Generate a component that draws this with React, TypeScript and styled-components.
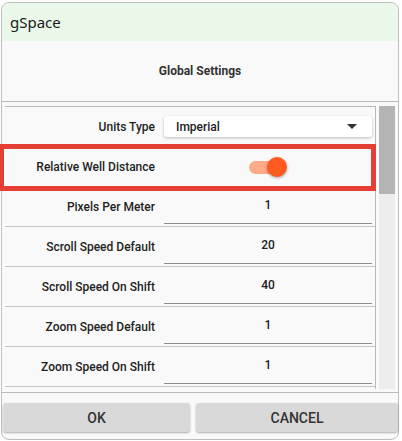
import React from "react";
import styled, { createGlobalStyle } from "styled-components";

const GlobalStyle = createGlobalStyle`
  * {
    box-sizing: border-box;
  }

  body {
    margin: 0;
    background: #ffffff;
    font-family: Roboto, "Liberation Sans", sans-serif;
  }
`;

interface Setting {
  label: string;
  value: string;
}

const numberSettings: Setting[] = [
  { label: "Pixels Per Meter", value: "1" },
  { label: "Scroll Speed Default", value: "20" },
  { label: "Scroll Speed On Shift", value: "40" },
  { label: "Zoom Speed Default", value: "1" },
  { label: "Zoom Speed On Shift", value: "1" },
];

const App = () => {
  return (
    <>
      <GlobalStyle />
      <Window>
        <TitleBar>gSpace</TitleBar>
        <Heading>Global Settings</Heading>
        <Panel>
          <List>
            <Row>
              <Label>Units Type</Label>
              <Select>
                <span>Imperial</span>
                <Caret />
              </Select>
            </Row>
            <Row>
              <Highlight />
              <Label>Relative Well Distance</Label>
              <SwitchCell>
                <Switch>
                  <Track />
                  <Thumb />
                </Switch>
              </SwitchCell>
            </Row>
            {numberSettings.map((s) => (
              <Row key={s.label}>
                <Label>{s.label}</Label>
                <Field>{s.value}</Field>
              </Row>
            ))}
          </List>
          <ScrollTrack>
            <ScrollThumb />
          </ScrollTrack>
        </Panel>
        <Footer>
          <Button>OK</Button>
          <Button>CANCEL</Button>
        </Footer>
      </Window>
    </>
  );
};

export default App;

const Window = styled.div`
  margin: 2px 0 0 1px;
  width: 398px;
  height: 438px;
  border: 1px solid #bdbdbd;
  border-radius: 8px;
  background: #f9f9f9;
  display: flex;
  flex-direction: column;
`;

const TitleBar = styled.div`
  height: 38px;
  flex-shrink: 0;
  display: flex;
  align-items: center;
  padding-left: 8px;
  border-radius: 7px 7px 0 0;
  background: #e9f8e9;
  color: #1b1b1b;
  font-family: "Segoe UI", "Noto Sans", "Open Sans", sans-serif;
  font-size: 15px;
`;

const Heading = styled.div`
  height: 60px;
  flex-shrink: 0;
  display: flex;
  align-items: center;
  justify-content: center;
  font-size: 12px;
  font-weight: 700;
  color: #333333;
`;

const Panel = styled.div`
  height: 292px;
  flex-shrink: 0;
  display: flex;
  gap: 3px;
  padding: 4px 3px 3px 3px;
  border-top: 1px solid #b8b8b8;
  border-bottom: 1px solid #b8b8b8;
`;

const List = styled.div`
  width: 371px;
  border-top: 1px solid #b8b8b8;
  border-right: 1px solid #b8b8b8;
`;

const Row = styled.div`
  position: relative;
  height: 40px;
  display: grid;
  grid-template-columns: 150px 208px;
  column-gap: 9px;
  align-items: center;
  border-bottom: 1px solid #c4c4c4;
`;

const Highlight = styled.div`
  position: absolute;
  left: -6px;
  right: -1px;
  top: -3px;
  bottom: -5px;
  border: 5px solid #e53e34;
  pointer-events: none;
`;

const Label = styled.div`
  text-align: right;
  font-size: 12px;
  font-weight: 500;
  color: #1f1f1f;
  white-space: nowrap;
`;

const Select = styled.div`
  height: 21px;
  display: flex;
  align-items: center;
  justify-content: space-between;
  padding: 0 15px 0 12px;
  background: #ffffff;
  border-radius: 3px;
  box-shadow: 0 1px 3px rgba(0, 0, 0, 0.25);
  font-size: 12px;
  font-weight: 500;
  color: #222222;
`;

const Caret = styled.span`
  width: 0;
  height: 0;
  border-left: 5px solid transparent;
  border-right: 5px solid transparent;
  border-top: 5px solid #333333;
`;

const SwitchCell = styled.div`
  display: flex;
  justify-content: center;
`;

const Switch = styled.div`
  position: relative;
  width: 38px;
  height: 20px;
`;

const Track = styled.div`
  position: absolute;
  left: 0;
  top: 4px;
  width: 34px;
  height: 13px;
  border-radius: 7px;
  background: #ffab88;
`;

const Thumb = styled.div`
  position: absolute;
  left: 18px;
  top: 0;
  width: 20px;
  height: 20px;
  border-radius: 50%;
  background: #ff5a1f;
  box-shadow: 0 1px 3px rgba(0, 0, 0, 0.35);
`;

const Field = styled.div`
  align-self: stretch;
  display: flex;
  align-items: center;
  justify-content: center;
  margin-bottom: 2px;
  border-bottom: 1px solid #8c8c8c;
  font-size: 12px;
  font-weight: 500;
  color: #222222;
`;

const ScrollTrack = styled.div`
  width: 16px;
  background: #ededed;
`;

const ScrollThumb = styled.div`
  height: 88px;
  background: #b4b4b4;
`;

const Footer = styled.div`
  flex: 1;
  display: grid;
  grid-template-columns: 187px 1fr;
  column-gap: 6px;
  align-items: start;
  padding: 10px 0 0 1px;
`;

const Button = styled.button`
  height: 29px;
  border: none;
  border-radius: 3px;
  background: #d9d9d9;
  box-shadow: 0 1px 2px rgba(0, 0, 0, 0.3);
  font-family: Roboto, "Liberation Sans", sans-serif;
  font-size: 14px;
  font-weight: 500;
  color: #333333;
`;
